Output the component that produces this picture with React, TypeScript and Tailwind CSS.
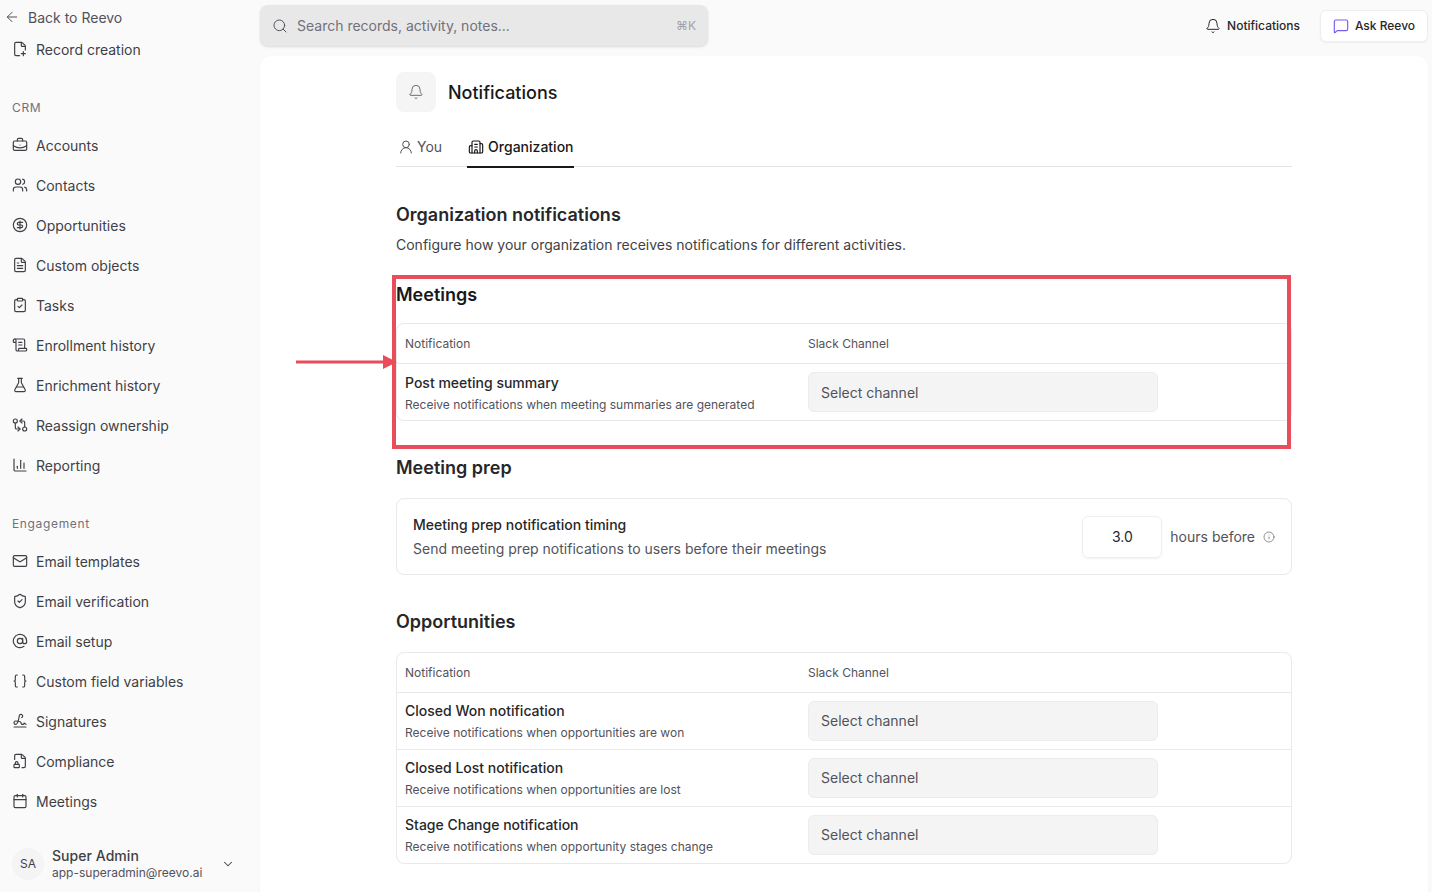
import React from "react";
import {
  ArrowLeft, FilePlusCorner, BriefcaseBusiness, Users, CircleDollarSign, FileText, ClipboardCheck,
  ScrollText, FlaskConical, GitCompareArrows, ChartColumn, Mail, ShieldCheck, AtSign, Braces, Signature,
  FileLock2, Calendar, ChevronDown, Search, Bell, MessageSquare, UserRound, Building2, Info,
} from "lucide-react";

function NavItem({ icon: Icon, label }: { icon: React.ElementType; label: string }) {
  return (
    <div className="flex h-10 items-center gap-2 pl-3 text-[14px] text-[#3f3f46]">
      <Icon size={16} strokeWidth={1.75} className="shrink-0" />
      <span>{label}</span>
    </div>
  );
}

function Sidebar() {
  const crm: [React.ElementType, string][] = [
    [BriefcaseBusiness, "Accounts"], [Users, "Contacts"], [CircleDollarSign, "Opportunities"],
    [FileText, "Custom objects"], [ClipboardCheck, "Tasks"], [ScrollText, "Enrollment history"],
    [FlaskConical, "Enrichment history"], [GitCompareArrows, "Reassign ownership"], [ChartColumn, "Reporting"],
  ];
  const eng: [React.ElementType, string][] = [
    [Mail, "Email templates"], [ShieldCheck, "Email verification"], [AtSign, "Email setup"],
    [Braces, "Custom field variables"], [Signature, "Signatures"], [FileLock2, "Compliance"], [Calendar, "Meetings"],
  ];
  return (
    <aside className="flex h-full w-[260px] shrink-0 flex-col">
      <div className="mt-[7px] flex h-[20px] items-center gap-2 pl-[4px] text-[14px] text-[#52525b]">
        <ArrowLeft size={16} strokeWidth={1.5} />
        <span>Back to Reevo</span>
      </div>
      <div className="mt-[2px]"><NavItem icon={FilePlusCorner} label="Record creation" /></div>
      <div className="mt-[31px] flex h-4 items-center pl-3 text-[12px] tracking-[0.65px] text-[#71717a]">CRM</div>
      <div className="mt-[9px]">{crm.map(([i, l]) => <NavItem key={l} icon={i} label={l} />)}</div>
      <div className="mt-[31px] flex h-4 items-center pl-3 text-[12px] tracking-[0.65px] text-[#71717a]">Engagement</div>
      <div className="mt-[9px]">{eng.map(([i, l]) => <NavItem key={l} icon={i} label={l} />)}</div>
      <div className="mt-[26px] flex items-center pl-3 pr-[25px]">
        <div className="flex size-8 shrink-0 items-center justify-center rounded-full bg-[#f4f4f5] text-[12px] text-[#3f3f46]">SA</div>
        <div className="ml-2 flex-1">
          <div className="text-[14px] leading-[18px] font-medium tracking-[0.05px] text-[#3f3f46]">Super Admin</div>
          <div className="text-[12px] leading-[16px] text-[#52525b]">app-superadmin@reevo.ai</div>
        </div>
        <ChevronDown size={14} strokeWidth={1.75} className="text-[#3f3f46]" />
      </div>
    </aside>
  );
}

function TopBar() {
  return (
    <header className="flex h-[56px] shrink-0 items-start justify-between pt-[5px] pr-1">
      <div className="flex h-[41px] w-[448px] items-center rounded-lg bg-[#e8e8e8] pr-3 pl-3 shadow-sm">
        <Search size={16} strokeWidth={1.5} className="text-[#52525b]" />
        <span className="ml-[9px] flex-1 text-[14px] text-[#71717a]">Search records, activity, notes...</span>
        <span className="text-[12px] text-[#a1a1aa]">⌘K</span>
      </div>
      <div className="flex items-center pt-[5px]">
        <Bell size={16} strokeWidth={1.5} className="text-[#27272a]" />
        <span className="ml-[6px] text-[12px] font-medium text-[#27272a]">Notifications</span>
        <div className="ml-5 flex h-[32px] w-[108px] items-center justify-center gap-[6px] rounded-md border border-[#eeeeee] bg-white shadow-xs">
          <MessageSquare size={16} strokeWidth={1.75} className="text-[#7c5cf0]" />
          <span className="text-[12px] font-medium text-[#27272a]">Ask Reevo</span>
        </div>
      </div>
    </header>
  );
}

function Row({ title, desc, tight = false }: { title: string; desc: string; tight?: boolean }) {
  return (
    <div className="flex h-[57px] items-center border-t border-[#e9e9ea]">
      <div className={tight ? "w-[411px] shrink-0 pl-2" : "w-[411px] shrink-0 pt-[2px] pl-2"}>
        <div className="text-[14px] leading-5 font-medium text-[#27272a]">{title}</div>
        <div className="mt-1 text-[12px] leading-4 text-[#52525b]">{desc}</div>
      </div>
      <div className={tight
        ? "flex h-10 w-[350px] items-center rounded-md border border-[#ececec] bg-[#f4f4f4] pb-[2px] pl-3 text-[14px] text-[#52525b]"
        : "flex h-10 w-[350px] items-center rounded-md border border-[#ececec] bg-[#f4f4f4] pl-3 text-[14px] text-[#52525b]"}>
        Select channel
      </div>
    </div>
  );
}

function TableHead() {
  return (
    <div className="flex h-[39px] items-center text-[12px] text-[#52525b]">
      <div className="w-[411px] shrink-0 pl-2">Notification</div>
      <div>Slack Channel</div>
    </div>
  );
}

function Content() {
  return (
    <main className="relative mr-1 min-h-0 flex-1 overflow-hidden rounded-t-xl bg-white pt-4 shadow-xs">
      <div className="mx-auto w-[896px]">
        <div className="flex items-center gap-3">
          <div className="flex size-10 items-center justify-center rounded-lg bg-[#f5f5f5]">
            <Bell size={16} strokeWidth={1.25} className="text-[#52525b]" />
          </div>
          <h1 className="text-[18px] font-medium text-[#18181b]">Notifications</h1>
        </div>
        <div className="mt-[15px] flex h-10 items-center border-b border-[#e4e4e7] text-[14px]">
          <div className="ml-[2px] flex h-10 items-center gap-[3px] text-[#52525b]">
            <UserRound size={16} strokeWidth={1.5} /> You
          </div>
          <div className="relative ml-[25px] flex h-10 items-center gap-1 pl-px font-medium text-[#18181b]">
            <Building2 size={16} strokeWidth={1.75} /> Organization
            <div className="absolute right-0 -bottom-px left-0 h-[2px] bg-[#18181b]" />
          </div>
        </div>

        <h2 className="mt-[36px] text-[18px] leading-6 font-semibold text-[#27272a]">Organization notifications</h2>
        <p className="mt-[8px] text-[14px] leading-5 text-[#3f3f46]">Configure how your organization receives notifications for different activities.</p>

        <h2 className="mt-[28px] text-[18px] leading-6 font-semibold text-[#18181b]">Meetings</h2>
        <div className="mt-[16px] overflow-hidden rounded-lg border border-[#e9e9ea]">
          <TableHead />
          <Row title="Post meeting summary" desc="Receive notifications when meeting summaries are generated" />
        </div>

        <h2 className="mt-[35px] text-[18px] leading-6 font-semibold text-[#27272a]">Meeting prep</h2>
        <div className="mt-[18px] flex h-[77px] items-center rounded-lg border border-[#e9e9ea] pr-4 pl-4">
          <div className="flex-1">
            <div className="text-[14px] leading-5 font-medium text-[#27272a]">Meeting prep notification timing</div>
            <div className="mt-1 text-[14px] leading-5 text-[#52525b]">Send meeting prep notifications to users before their meetings</div>
          </div>
          <div className="flex h-[42px] w-[80px] items-center justify-center rounded-md border border-[#eeeeee] text-[14px] text-[#27272a] shadow-xs">3.0</div>
          <span className="ml-2 text-[14px] text-[#52525b]">hours before</span>
          <Info size={12} strokeWidth={1.25} className="ml-2 text-[#52525b]" />
        </div>

        <h2 className="mt-[35px] text-[18px] leading-6 font-semibold text-[#27272a]">Opportunities</h2>
        <div className="mt-[18px] overflow-hidden rounded-lg border border-[#e9e9ea]">
          <TableHead />
          <Row tight title="Closed Won notification" desc="Receive notifications when opportunities are won" />
          <Row tight title="Closed Lost notification" desc="Receive notifications when opportunities are lost" />
          <Row tight title="Stage Change notification" desc="Receive notifications when opportunity stages change" />
        </div>
      </div>
    </main>
  );
}

export default function App() {
  return (
    <div className="relative flex h-[892px] w-[1432px] overflow-hidden bg-[#fafafa] font-['Inter',sans-serif]">
      <Sidebar />
      <div className="flex min-w-0 flex-1 flex-col">
        <TopBar />
        <Content />
      </div>
      {/* Annotation overlay */}
      <div className="absolute top-[275px] left-[392px] h-[174px] w-[899px] border-[4px] border-[#e94c5a]" />
      <svg className="absolute top-[354px] left-[296px]" width="102" height="16" viewBox="0 0 102 16">
        <rect x="0" y="6.5" width="90" height="3" fill="#e94c5a" />
        <polygon points="87,1 101,8 87,15" fill="#e94c5a" />
      </svg>
    </div>
  );
}
